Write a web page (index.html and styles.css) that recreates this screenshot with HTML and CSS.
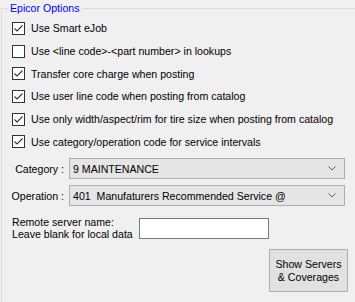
FILE: index.html
```html
<!DOCTYPE html>
<html>
<head>
<meta charset="utf-8">
<link rel="stylesheet" href="styles.css">
</head>
<body>
<div class="group">
  <div class="legend">Epicor Options</div>
  <div class="checks">
    <div class="check-row"><span class="box checked"><svg width="13" height="13" viewBox="0 0 13 13"><polyline points="2.5,6.5 5,9 10.5,3.5" fill="none" stroke="#333" stroke-width="1.1"/></svg></span><span>Use Smart eJob</span></div>
    <div class="check-row"><span class="box"></span><span>Use &lt;line code&gt;-&lt;part number&gt; in lookups</span></div>
    <div class="check-row"><span class="box checked"><svg width="13" height="13" viewBox="0 0 13 13"><polyline points="2.5,6.5 5,9 10.5,3.5" fill="none" stroke="#333" stroke-width="1.1"/></svg></span><span>Transfer core charge when posting</span></div>
    <div class="check-row"><span class="box checked"><svg width="13" height="13" viewBox="0 0 13 13"><polyline points="2.5,6.5 5,9 10.5,3.5" fill="none" stroke="#333" stroke-width="1.1"/></svg></span><span>Use user line code when posting from catalog</span></div>
    <div class="check-row"><span class="box checked"><svg width="13" height="13" viewBox="0 0 13 13"><polyline points="2.5,6.5 5,9 10.5,3.5" fill="none" stroke="#333" stroke-width="1.1"/></svg></span><span>Use only width/aspect/rim for tire size when posting from catalog</span></div>
    <div class="check-row"><span class="box checked"><svg width="13" height="13" viewBox="0 0 13 13"><polyline points="2.5,6.5 5,9 10.5,3.5" fill="none" stroke="#333" stroke-width="1.1"/></svg></span><span>Use category/operation code for service intervals</span></div>
  </div>
  <div class="field-row first">
    <span class="field-label">Category :</span>
    <div class="combo"><span class="combo-text">9 MAINTENANCE</span><svg class="chev" width="8" height="5" viewBox="0 0 8 5"><polyline points="0.5,0.5 4,4 7.5,0.5" fill="none" stroke="#606060" stroke-width="1"/></svg></div>
  </div>
  <div class="field-row second">
    <span class="field-label">Operation :</span>
    <div class="combo"><span class="combo-text">401  Manufaturers Recommended Service @</span><svg class="chev" width="8" height="5" viewBox="0 0 8 5"><polyline points="0.5,0.5 4,4 7.5,0.5" fill="none" stroke="#606060" stroke-width="1"/></svg></div>
  </div>
  <div class="remote-row">
    <div class="remote-label">Remote server name:<br>Leave blank for local data</div>
    <div class="textbox"></div>
  </div>
  <div class="button-row">
    <div class="button">Show Servers<br>&amp; Coverages</div>
  </div>
</div>
</body>
</html>
```
FILE: styles.css
```css
html, body {
  margin: 0;
  padding: 0;
  background: #f0f0f0;
  width: 355px;
  height: 302px;
  overflow: hidden;
  font-family: "Liberation Sans", Arial, sans-serif;
  font-size: 10.6px;
  color: #000;
}

.group {
  position: relative;
  margin: 8px 0 0 1px;
  border-top: 1px solid #dcdcdc;
  border-left: 1px solid #dcdcdc;
  height: 300px;
  box-sizing: border-box;
  padding: 8px 7px 0 0;
}

.legend {
  position: absolute;
  top: -7px;
  left: 6px;
  padding: 0 2px;
  background: #f0f0f0;
  color: #0000ff;
  line-height: 13px;
}

.checks {
  display: flex;
  flex-direction: column;
}

.check-row {
  height: 22.7px;
  display: flex;
  align-items: center;
  white-space: nowrap;
}

.box {
  width: 13px;
  height: 13px;
  box-sizing: border-box;
  border: 1px solid #333;
  background: #fff;
  margin-left: 10px;
  margin-right: 6px;
  position: relative;
}

.box svg {
  position: absolute;
  left: -1px;
  top: -1px;
}

.field-row {
  display: flex;
  align-items: center;
  margin-right: 3px;
}

.field-row.first { margin-top: 5px; }
.field-row.second { margin-top: 6px; }

.field-label {
  width: 62px;
  text-align: right;
  margin-right: 5px;
  white-space: nowrap;
}

.combo {
  flex: 1;
  height: 21px;
  box-sizing: border-box;
  border: 1px solid #adadad;
  background: #e5e5e5;
  display: flex;
  align-items: center;
  padding-left: 3px;
  padding-right: 8px;
}

.combo-text {
  flex: 1;
  white-space: pre;
}

.chev {
  display: block;
}

.remote-row {
  display: flex;
  align-items: flex-end;
  margin-top: 10px;
}

.remote-label {
  margin-left: 10px;
  line-height: 12px;
  white-space: nowrap;
}

.textbox {
  width: 130px;
  height: 21px;
  box-sizing: border-box;
  border: 1px solid #7a7a7a;
  background: #fff;
  margin-left: 6px;
  margin-bottom: 1px;
}

.button-row {
  display: flex;
  justify-content: flex-end;
  margin-top: 9px;
}

.button {
  width: 79px;
  height: 43px;
  box-sizing: border-box;
  border: 1px solid #adadad;
  background: #e1e1e1;
  display: flex;
  align-items: center;
  justify-content: center;
  text-align: center;
  line-height: 13px;
}
```
